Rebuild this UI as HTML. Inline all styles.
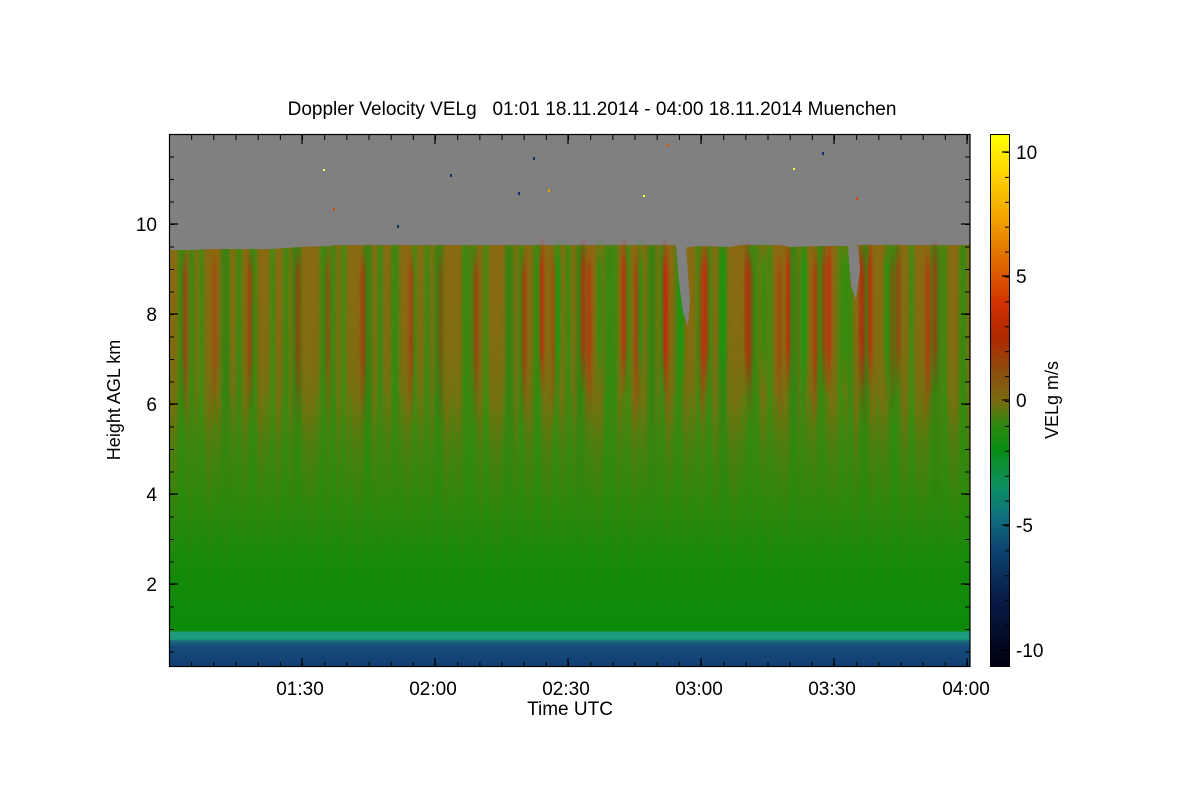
<!DOCTYPE html>
<html><head><meta charset="utf-8"><style>
html,body{margin:0;padding:0;background:#fff;width:1200px;height:800px;overflow:hidden}
#p{position:absolute;left:169px;top:135px;width:801px;height:532px;background:#808080;overflow:hidden}
.l{position:absolute;left:0;width:801px}
#base{top:110px;height:422px;background:linear-gradient(180deg,#8a6a10 0px,#826c10 100px,#747210 155px,#4e7e0e 200px,#30860c 260px,#168a0a 320px,#0c8a0a 386px,#1f9e80 387px,#1c9a7c 394px,#1a6a7c 396px,#164c7a 402px,#123e72 422px)}
#grn{top:110px;height:300px;opacity:.6;filter:blur(1.5px);background:
repeating-linear-gradient(90deg,transparent 0 9px,#0a9a10 9px 17px,transparent 17px 30px,#10a010 30px 35px,transparent 35px 52px,#0a9010 52px 61px,transparent 61px 71px),
repeating-linear-gradient(90deg,transparent 0 20px,#109a10 20px 26px,transparent 26px 47px);
-webkit-mask-image:linear-gradient(180deg,#000 0,#000 50%,transparent 100%);mask-image:linear-gradient(180deg,#000 0,#000 50%,transparent 100%)}
#red{top:112px;height:180px;opacity:.6;filter:blur(1.5px);background:
repeating-linear-gradient(90deg,transparent 0 14px,#d01510 14px 18px,transparent 18px 44px,#c82010 44px 47px,transparent 47px 79px,#d81010 79px 83px,transparent 83px 113px);
-webkit-mask-image:linear-gradient(180deg,transparent 0,#000 15%,#000 60%,transparent 100%);mask-image:linear-gradient(180deg,transparent 0,#000 15%,#000 60%,transparent 100%)}
#red2{top:100px;height:160px;left:360px;width:360px;opacity:.65;filter:blur(1.2px);background:repeating-linear-gradient(90deg,transparent 0 11px,#e01010 11px 15px,transparent 15px 27px,#0aa010 27px 32px,transparent 32px 41px);-webkit-mask-image:linear-gradient(180deg,transparent 0,#000 20%,#000 70%,transparent 100%);mask-image:linear-gradient(180deg,transparent 0,#000 20%,#000 70%,transparent 100%)}
#red3{top:100px;height:160px;left:640px;width:161px;opacity:.55;filter:blur(1.2px);background:repeating-linear-gradient(90deg,transparent 0 13px,#e01010 13px 17px,transparent 17px 37px);-webkit-mask-image:linear-gradient(180deg,transparent 0,#000 20%,#000 70%,transparent 100%);mask-image:linear-gradient(180deg,transparent 0,#000 20%,#000 70%,transparent 100%)}
#fine{top:260px;height:250px;opacity:.3;background:repeating-linear-gradient(90deg,transparent 0 5px,#8a6010 5px 6px,transparent 6px 11px,#10a010 11px 13px,transparent 13px 17px);-webkit-mask-image:linear-gradient(180deg,#000,transparent);mask-image:linear-gradient(180deg,#000,transparent)}
#cb{position:absolute;left:990px;top:134px;width:20px;height:533px;background:linear-gradient(180deg,#ffff00 0%,#ffd000 8%,#f0a000 16%,#e06800 24%,#d03000 32%,#b02800 38%,#8a5010 45%,#7a6a10 50%,#2a8a10 55%,#0a8c10 59%,#0c9060 66%,#10707e 72%,#0c4470 78%,#081c48 87%,#000010 100%);border:1px solid #000;box-sizing:border-box}
svg{position:absolute;left:0;top:0}
text{font-family:"Liberation Sans","DejaVu Sans",sans-serif;font-size:19px;fill:#000}
</style></head><body>
<div id="p">
<div class="l" id="base"></div>
<div class="l" id="fine"></div>
<div class="l" id="grn"></div>
<div class="l" id="red"></div>
<div class="l" id="red2"></div>
<div class="l" id="red3"></div>
</div>
<div id="cb"></div>
<svg width="1200" height="800">
<g fill="#808080">
<polygon points="169,135 970,135 970,243 940,241 910,244 880,243 850,246 820,246 790,247 760,241 730,247 700,246 680,248 660,238 630,235 600,240 570,235 540,236 510,233 480,239 450,236 420,238 390,235 360,240 330,246 300,247 270,249 240,249 210,249 190,250 169,250"/>
<polygon points="676,246 686,246 690,300 688,326 683,312 679,282"/>
<polygon points="848,246 858,246 860,270 856,300 851,286 849,262"/>
</g>
<g>
<rect x="323" y="169" width="2" height="2" fill="#ffff60"/>
<rect x="333" y="208" width="2" height="3" fill="#c05010"/>
<rect x="397" y="225" width="2" height="3" fill="#10306a"/>
<rect x="450" y="174" width="2" height="3" fill="#10306a"/>
<rect x="518" y="192" width="2" height="3" fill="#10306a"/>
<rect x="533" y="157" width="2" height="3" fill="#10306a"/>
<rect x="548" y="189" width="2" height="3" fill="#e0a000"/>
<rect x="643" y="195" width="2" height="2" fill="#ffff40"/>
<rect x="667" y="144" width="2" height="3" fill="#d06010"/>
<rect x="793" y="168" width="2" height="2" fill="#ffff40"/>
<rect x="822" y="152" width="2" height="3" fill="#10306a"/>
<rect x="856" y="197" width="2" height="3" fill="#c05010"/>
</g>
<defs>
<pattern id="xt" x="302" y="0" width="22.167" height="10" patternUnits="userSpaceOnUse"><rect x="0" y="0" width="1" height="10" fill="#000"/></pattern>
<pattern id="yt" x="0" y="224" width="10" height="22.5" patternUnits="userSpaceOnUse"><rect x="0" y="0" width="10" height="1" fill="#000"/></pattern>
<pattern id="ct" x="0" y="152" width="10" height="24.9" patternUnits="userSpaceOnUse"><rect x="0" y="0" width="10" height="1" fill="#000"/></pattern>
</defs>
<rect x="170" y="662" width="800" height="5" fill="url(#xt)"/>
<rect x="170" y="135" width="800" height="5" fill="url(#xt)"/>
<rect x="169" y="136" width="5" height="531" fill="url(#yt)"/>
<rect x="965" y="136" width="5" height="531" fill="url(#yt)"/>
<rect x="1005" y="140" width="5" height="520" fill="url(#ct)"/>
<g stroke="#000" stroke-width="1.2">
<rect x="169.5" y="134.5" width="800.5" height="532" fill="none"/>
<path d="M302 667v-9M435 667v-9M568 667v-9M701 667v-9M834 667v-9M967 667v-9M302 135v9M435 135v9M568 135v9M701 135v9M834 135v9M967 135v9"/>
<path d="M169 224h9M169 314h9M169 404h9M169 494h9M169 584h9M970 224h-9M970 314h-9M970 404h-9M970 494h-9M970 584h-9"/>
<path d="M1010 152h-8M1010 276h-8M1010 400h-8M1010 525h-8M1010 650h-8"/>
</g>
<g text-anchor="middle">
<text x="592" y="115">Doppler Velocity VELg &#160;&#160;01:01 18.11.2014 - 04:00 18.11.2014 Muenchen</text>
<text x="300" y="695">01:30</text><text x="433" y="695">02:00</text><text x="566" y="695">02:30</text><text x="699" y="695">03:00</text><text x="832" y="695">03:30</text><text x="966" y="695">04:00</text>
<text x="570" y="715">Time UTC</text>
<text transform="translate(120,400) rotate(-90)" style="font-size:18px">Height AGL km</text>
<text transform="translate(1058,400) rotate(-90)" style="font-size:18px">VELg m/s</text>
</g>
<g text-anchor="end">
<text x="157" y="231">10</text><text x="157" y="321">8</text><text x="157" y="411">6</text><text x="157" y="501">4</text><text x="157" y="591">2</text>
</g>
<g>
<text x="1016" y="159">10</text><text x="1016" y="283">5</text><text x="1016" y="407">0</text><text x="1016" y="532">-5</text><text x="1016" y="657">-10</text>
</g>
</svg>
</body></html>
